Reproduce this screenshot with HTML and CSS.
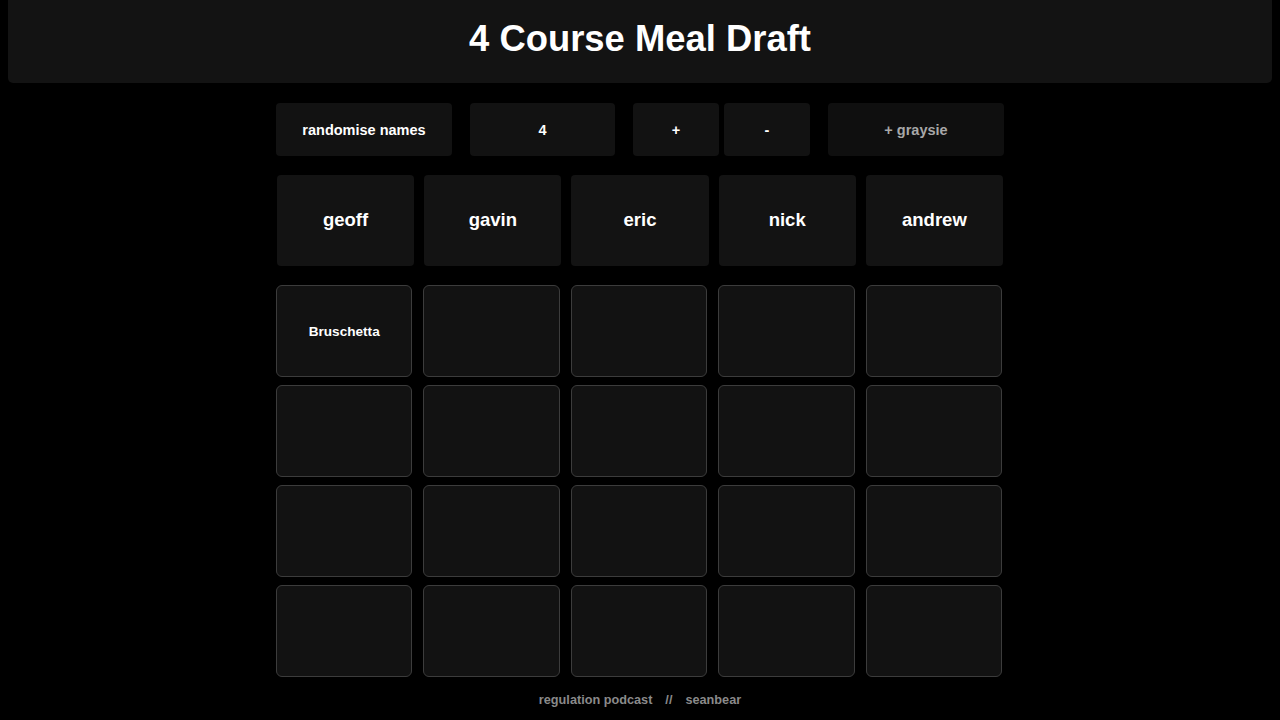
FILE: index.html
```html
<!DOCTYPE html>
<html>
<head>
<meta charset="utf-8">
<link rel="stylesheet" href="styles.css">
</head>
<body>
<header class="header"><h1 class="title">4 Course Meal Draft</h1></header>
<main class="main">
  <div class="controls">
    <button class="btn btn-wide">randomise names</button>
    <button class="btn btn-count">4</button>
    <div class="pm">
      <button class="btn btn-small">+</button>
      <button class="btn btn-small">-</button>
    </div>
    <button class="btn btn-wide btn-muted">+ graysie</button>
  </div>
  <div class="names">
    <div class="name">geoff</div>
    <div class="name">gavin</div>
    <div class="name">eric</div>
    <div class="name">nick</div>
    <div class="name">andrew</div>
  </div>
  <div class="grid">
    <div class="cell">Bruschetta</div><div class="cell"></div><div class="cell"></div><div class="cell"></div><div class="cell"></div>
    <div class="cell"></div><div class="cell"></div><div class="cell"></div><div class="cell"></div><div class="cell"></div>
    <div class="cell"></div><div class="cell"></div><div class="cell"></div><div class="cell"></div><div class="cell"></div>
    <div class="cell"></div><div class="cell"></div><div class="cell"></div><div class="cell"></div><div class="cell"></div>
  </div>
  <footer class="footer">regulation podcast<span class="sep">//</span>seanbear</footer>
</main>
</body>
</html>
```
FILE: styles.css
```css
* { box-sizing: border-box; }
html, body { background: #000; }
body {
  margin: 0;
  padding: 0 8px;
  font-family: "Liberation Sans", Arial, sans-serif;
  color: #fff;
}
.header {
  height: 83px;
  background: #131313;
  border-radius: 0 0 5px 5px;
  display: flex;
  align-items: center;
  justify-content: center;
}
.title {
  margin: 0;
  font-size: 36.4px;
  font-weight: bold;
  color: #fff;
  position: relative;
  top: -3px;
}
.main {
  width: 728px;
  margin: 0 auto;
  display: flex;
  flex-direction: column;
}
.controls {
  margin-top: 20px;
  display: flex;
  align-items: center;
  justify-content: space-between;
  height: 53px;
}
.btn {
  height: 53px;
  background: #121212;
  border: none;
  border-radius: 4px;
  color: #fff;
  font-family: "Liberation Sans", Arial, sans-serif;
  font-weight: bold;
  font-size: 14.5px;
  padding: 0;
}
.btn-wide { width: 176px; }
.btn-count { width: 145px; }
.pm { display: flex; gap: 5px; }
.btn-small { width: 86px; }
.btn-muted { color: #a8a8a8; background: #0f0f0f; }
.names {
  margin-top: 19px;
  display: grid;
  grid-template-columns: repeat(5, 1fr);
  gap: 10px;
  padding: 0 1px;
}
.name {
  height: 91px;
  background: #131313;
  border-radius: 4px;
  display: flex;
  align-items: center;
  justify-content: center;
  font-size: 18.5px;
  font-weight: bold;
  padding-bottom: 1px;
}
.grid {
  margin-top: 19px;
  display: grid;
  grid-template-columns: repeat(5, 1fr);
  column-gap: 11px;
  row-gap: 8px;
  padding-right: 2px;
}
.cell {
  height: 92px;
  background: #121212;
  border: 1px solid #3c3c3c;
  border-radius: 6px;
  display: flex;
  align-items: center;
  justify-content: center;
  font-size: 13.6px;
  font-weight: bold;
  color: #fff;
}
.footer {
  margin-top: 16px;
  text-align: center;
  font-size: 12.7px;
  font-weight: bold;
  color: #8a8a8a;
}
.sep { margin: 0 13px; }
```
